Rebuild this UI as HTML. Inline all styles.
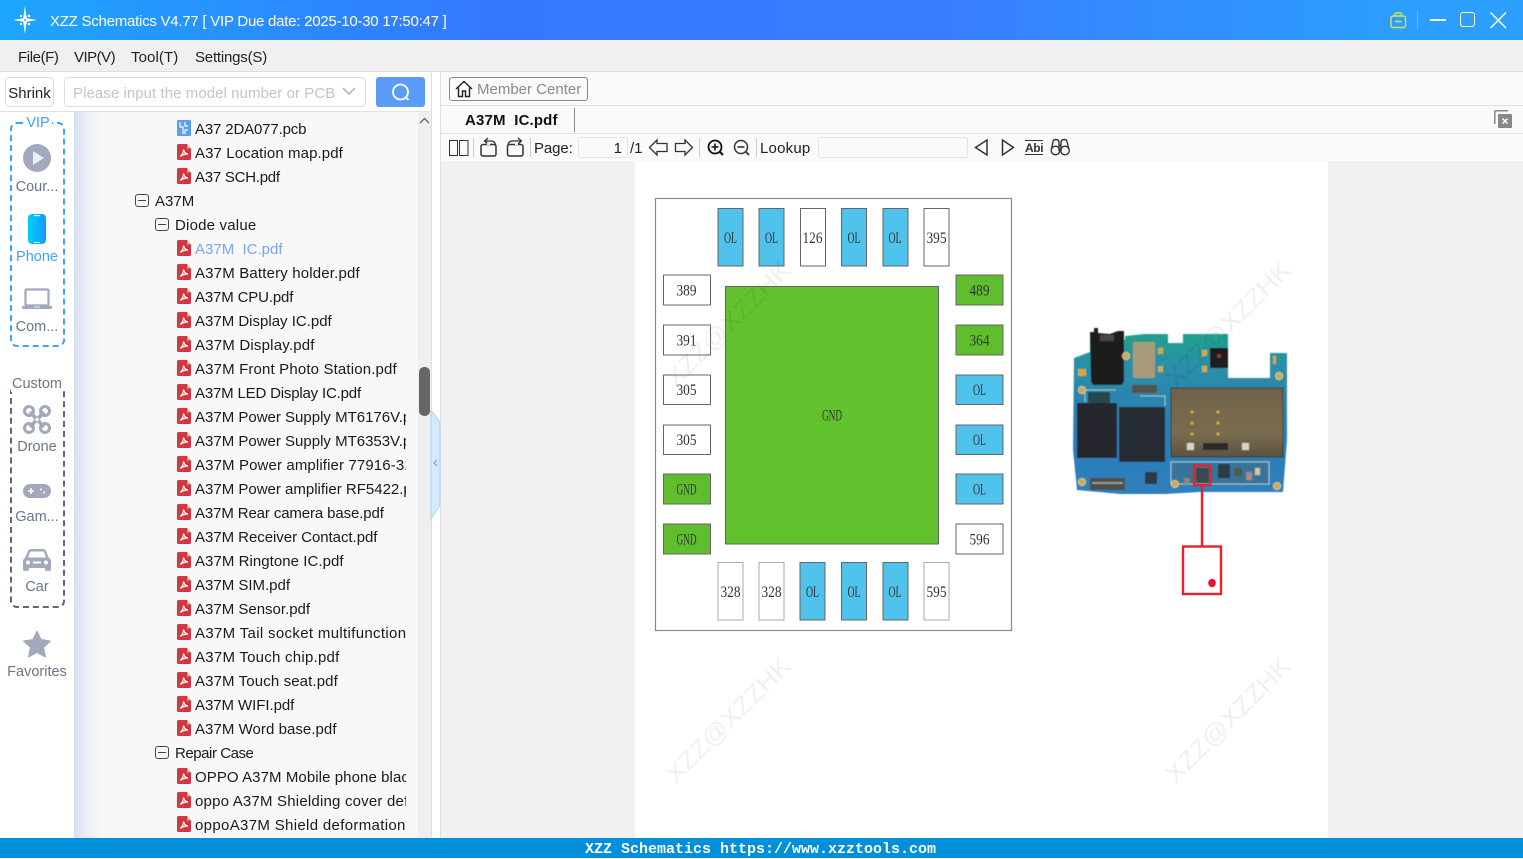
<!DOCTYPE html>
<html><head><meta charset="utf-8"><style>
html,body{margin:0;padding:0;width:1523px;height:858px;overflow:hidden;background:#fff;font-family:"Liberation Sans","Noto Sans CJK SC",sans-serif;font-size:15px;color:#222}
.a{position:absolute;white-space:pre}
svg{position:absolute;overflow:visible}
#tree{position:absolute;left:74px;top:112px;width:344px;height:726px;overflow:hidden;background:linear-gradient(90deg,#d5e0f2 0,#e8edf6 10px,#f8f8f8 28px)}
#rows{position:absolute;left:0;top:4px;width:332px;overflow:hidden}
.r{height:24px;line-height:28px;white-space:pre;overflow:hidden;position:relative;color:#1a1a1a}
.f{padding-left:121px}
.f svg{left:103px;top:4px}
.d1{padding-left:81px}.d2{padding-left:101px}
.d1 i,.d2 i{position:absolute;top:6px;width:12px;height:11px;border:1.2px solid #444;border-radius:3px}
.d1 i{left:61px}.d2 i{left:81px}
.d1 i:after,.d2 i:after{content:"";position:absolute;left:2px;right:2px;top:5px;height:1.2px;background:#444}
.s{position:absolute;left:5px;width:64px;text-align:center;color:#6b7688;font-size:14.5px;line-height:22px}
</style></head><body>
<svg width="0" height="0" style="position:absolute"><defs>
<symbol id="pdf" viewBox="0 0 14 16"><path d="M1.5 0H10L14 4.5V14.5A1.5 1.5 0 0 1 12.500 16H1.500A1.500 1.500 0 0 1 0 14.500V1.500A1.500 1.500 0 0 1 1.500 0Z" fill="#d2373f"/><path d="M10 0V4.500H14Z" fill="#eea0a4"/><path d="M3 12.500C5 11.500 6.500 8.500 6.700 5.500C7 8 8.500 9.800 11 10C8.500 10 5.500 10.500 3 12.500Z" fill="none" stroke="#fff" stroke-width="1.200"/></symbol>
</defs></svg>

<!-- title bar -->
<div class="a" style="left:0;top:0;width:1523px;height:40px;background:linear-gradient(90deg,#1ea6fc 0,#3478ff 32%,#3a7cff 60%,#2b9efe 92%,#2b9efe 100%)"></div>
<svg style="left:12px;top:6px" width="26" height="28" viewBox="0 0 26 28"><path d="M13 0L14.800 12.200L25 14L14.800 15.800L13 28L11.200 15.800L1 14L11.200 12.200Z" fill="#fff"/><circle cx="9" cy="10" r="1.200" fill="#fff"/><circle cx="17" cy="10" r="1.200" fill="#fff"/><circle cx="9" cy="18" r="1.200" fill="#fff"/><circle cx="17" cy="18" r="1.200" fill="#fff"/><circle cx="13" cy="14" r="1" fill="#3a9cff"/></svg>
<div class="a" style="left:50px;top:11px;line-height:21px;font-size:15px;color:#fff;letter-spacing:-.245px">XZZ Schematics V4.77 [ VIP Due date: 2025-10-30 17:50:47 ]</div>
<svg style="left:1390px;top:12px" width="17" height="17" viewBox="0 0 17 17" fill="none" stroke="#d9e43c" stroke-width="1.400"><rect x="1" y="4" width="14.500" height="11.500" rx="2"/><path d="M5 4V2.200Q5 1 6.200 1H10.300Q11.500 1 11.500 2.200V4M5 9.500H11.500"/></svg>
<div class="a" style="left:1417px;top:10px;width:1px;height:20px;background:#74b9fb"></div>
<div class="a" style="left:1430px;top:19px;width:16px;height:2px;background:#fff"></div>
<div class="a" style="left:1460px;top:12px;width:13px;height:13px;border:1.500px solid #fff;border-radius:3px"></div>
<svg style="left:1490px;top:12px" width="17" height="17" viewBox="0 0 17 17"><path d="M.5.500L16 16M16 .500L.5 16" stroke="#fff" stroke-width="1.500"/></svg>

<!-- menu -->
<div class="a" style="left:0;top:40px;width:1523px;height:31px;background:#f0f0f0;border-bottom:1px solid #dcdcdc"></div>
<div class="a" style="left:18px;top:49px;line-height:18px;letter-spacing:-.4px">File(F)</div>
<div class="a" style="left:74px;top:49px;line-height:18px;letter-spacing:-.5px">VIP(V)</div>
<div class="a" style="left:131px;top:49px;line-height:18px;letter-spacing:.1px">Tool(T)</div>
<div class="a" style="left:195px;top:49px;line-height:18px;letter-spacing:-.2px">Settings(S)</div>

<!-- search row -->
<div class="a" style="left:431px;top:72px;width:10px;height:766px;background:#fff;border-right:1px solid #e0e0e0;border-left:1px solid #e0e0e0;box-sizing:border-box"></div>
<div class="a" style="left:5px;top:77px;width:47px;height:28px;border:1px solid #dcdfe6;border-radius:4px;text-align:center;line-height:31px;color:#222">Shrink</div>
<div class="a" style="left:64px;top:77px;width:300px;height:28px;border:1px solid #dcdfe6;border-radius:4px;line-height:31px;color:#c0c4cc;text-indent:8px;letter-spacing:.06px">Please input the model number or PCB</div>
<svg style="left:342px;top:87px" width="14" height="9" viewBox="0 0 14 9"><path d="M1 1L7 7L13 1" fill="none" stroke="#a8abb2" stroke-width="1.400"/></svg>
<div class="a" style="left:376px;top:77px;width:49px;height:30px;background:#5a9cf8;border-radius:3px"></div>
<svg style="left:391px;top:83px" width="20" height="19" viewBox="0 0 20 19" fill="none" stroke="#fff" stroke-width="1.800"><circle cx="9.500" cy="9" r="7.500"/><path d="M15 14.500L17.500 17"/></svg>
<div class="a" style="left:0;top:111px;width:431px;height:1px;background:#e0e0e0"></div>

<!-- sidebar -->
<div class="a" style="left:10px;top:122px;width:51px;height:221px;border:2px dashed #3ea2ff;border-radius:7px;box-sizing:content-box"></div>
<div class="s" style="top:113px;left:24px;width:28px;background:#fff;color:#3ea2ff;height:14px;line-height:20px;overflow:hidden">VIP</div>
<svg style="left:23px;top:144px" width="28" height="28" viewBox="0 0 28 28"><circle cx="14" cy="14" r="14" fill="#a3a9bc"/><path d="M10 7L21 14L10 21Z" fill="#eceef2"/></svg>
<div class="s" style="top:176px">Cour...</div>
<svg style="left:28px;top:214px" width="18" height="31" viewBox="0 0 18 31"><defs><linearGradient id="ph" x1="0" x2="1" y1="0" y2="0"><stop offset="0" stop-color="#00d0f5"/><stop offset="1" stop-color="#1a98ff"/></linearGradient></defs><rect width="18" height="30" rx="4" fill="url(#ph)"/><rect x="6" y="1" width="6" height="1.200" fill="#c8f4ff"/><rect x="6" y="28" width="6" height="1" fill="#c8f4ff"/></svg>
<div class="s" style="top:246px;color:#3ea2ff">Phone</div>
<svg style="left:22px;top:288px" width="30" height="22" viewBox="0 0 30 22"><rect x="3.500" y="1.500" width="23" height="16" rx="1" fill="#fff" stroke="#a3a9bc" stroke-width="2.200"/><path d="M0 18H30V19.500Q30 21 28.500 21H1.500Q0 21 0 19.500Z" fill="#a3a9bc"/><rect x="12" y="18.500" width="6" height="1" fill="#eee"/></svg>
<div class="s" style="top:316px">Com...</div>

<div class="a" style="left:10px;top:385px;width:51px;height:219px;border:2px dashed #5d6878;border-radius:7px"></div>
<div class="s" style="top:373px;left:11px;width:52px;background:#fff;height:19px">Custom</div>
<svg style="left:23px;top:405px" width="28" height="29" viewBox="0 0 28 29" fill="none" stroke="#a3a9bc"><circle cx="6" cy="6" r="4.500" stroke-width="3"/><circle cx="22" cy="6" r="4.500" stroke-width="3"/><circle cx="6" cy="23" r="4.500" stroke-width="3"/><circle cx="22" cy="23" r="4.500" stroke-width="3"/><path d="M7 7L21 22M21 7L7 22" stroke-width="3.500"/><circle cx="14" cy="14.500" r="2.500" fill="#fff" stroke-width="1.500"/></svg>
<div class="s" style="top:436px">Drone</div>
<svg style="left:23px;top:484px" width="28" height="14" viewBox="0 0 28 14"><rect width="28" height="14" rx="7" fill="#a3a9bc"/><path d="M5 7H11M8 4V10" stroke="#fff" stroke-width="1.500"/><circle cx="18" cy="5.500" r="1" fill="#fff"/><circle cx="21" cy="8.500" r="1" fill="#fff"/></svg>
<div class="s" style="top:506px">Gam...</div>
<svg style="left:23px;top:548px" width="28" height="24" viewBox="0 0 28 24"><path d="M2 10L5 3Q6 1 8 1H20Q22 1 23 3L26 10Q28 11 28 13V21Q28 23 26 23H24Q22 23 22 21V20H6V21Q6 23 4 23H2Q0 23 0 21V13Q0 11 2 10Z" fill="#a3a9bc"/><path d="M5 9.500L7 4Q7.500 3.500 8.500 3.500H19.500Q20.500 3.500 21 4L23 9.500Z" fill="#fff"/><circle cx="5" cy="14.500" r="2" fill="#fff"/><circle cx="23" cy="14.500" r="2" fill="#fff"/><rect x="10" y="13.500" width="8" height="2" fill="#fff"/></svg>
<div class="s" style="top:576px">Car</div>
<svg style="left:23px;top:630px" width="28" height="28" viewBox="0 0 28 28"><path d="M14 1L18 9.500L27.500 11L20.500 17.500L22.500 27L14 22.500L5.500 27L7.500 17.500L.5 11L10 9.500Z" fill="#a3a9bc" stroke="#a3a9bc" stroke-linejoin="round" stroke-width="1"/></svg>
<div class="s" style="top:661px">Favorites</div>

<!-- tree -->
<div id="tree"><div id="rows">
<div class="r f" style="letter-spacing:-.15px"><svg width="14" height="16" viewBox="0 0 14 16"><rect width="14" height="16" rx="1" fill="#5c9cf5"/><path d="M3 2V7H6V14M8 2V6H11M8 14V10H11" fill="none" stroke="#fff" stroke-width="1.200"/></svg>A37 2DA077.pcb</div>
<div class="r f" style="letter-spacing:.1px"><svg width="14" height="16"><use href="#pdf"/></svg>A37 Location map.pdf</div>
<div class="r f" style="letter-spacing:-.25px"><svg width="14" height="16"><use href="#pdf"/></svg>A37 SCH.pdf</div>
<div class="r d1"><i></i>A37M</div>
<div class="r d2" style="letter-spacing:.2px"><i></i>Diode value</div>
<div class="r f" style="color:#7aa5fa"><svg width="14" height="16"><use href="#pdf"/></svg>A37M  IC.pdf</div>
<div class="r f" style="letter-spacing:.17px"><svg width="14" height="16"><use href="#pdf"/></svg>A37M Battery holder.pdf</div>
<div class="r f" style="letter-spacing:-.15px"><svg width="14" height="16"><use href="#pdf"/></svg>A37M CPU.pdf</div>
<div class="r f"><svg width="14" height="16"><use href="#pdf"/></svg>A37M Display IC.pdf</div>
<div class="r f" style="letter-spacing:.2px"><svg width="14" height="16"><use href="#pdf"/></svg>A37M Display.pdf</div>
<div class="r f" style="letter-spacing:.15px"><svg width="14" height="16"><use href="#pdf"/></svg>A37M Front Photo Station.pdf</div>
<div class="r f" style="letter-spacing:-.18px"><svg width="14" height="16"><use href="#pdf"/></svg>A37M LED Display IC.pdf</div>
<div class="r f"><svg width="14" height="16"><use href="#pdf"/></svg>A37M Power Supply MT6176V.pdf</div>
<div class="r f"><svg width="14" height="16"><use href="#pdf"/></svg>A37M Power Supply MT6353V.pdf</div>
<div class="r f" style="letter-spacing:.12px"><svg width="14" height="16"><use href="#pdf"/></svg>A37M Power amplifier 77916-31.pdf</div>
<div class="r f"><svg width="14" height="16"><use href="#pdf"/></svg>A37M Power amplifier RF5422.pdf</div>
<div class="r f" style="letter-spacing:-.12px"><svg width="14" height="16"><use href="#pdf"/></svg>A37M Rear camera base.pdf</div>
<div class="r f" style="letter-spacing:-.04px"><svg width="14" height="16"><use href="#pdf"/></svg>A37M Receiver Contact.pdf</div>
<div class="r f" style="letter-spacing:.05px"><svg width="14" height="16"><use href="#pdf"/></svg>A37M Ringtone IC.pdf</div>
<div class="r f"><svg width="14" height="16"><use href="#pdf"/></svg>A37M SIM.pdf</div>
<div class="r f"><svg width="14" height="16"><use href="#pdf"/></svg>A37M Sensor.pdf</div>
<div class="r f" style="letter-spacing:.33px"><svg width="14" height="16"><use href="#pdf"/></svg>A37M Tail socket multifunction</div>
<div class="r f" style="letter-spacing:.25px"><svg width="14" height="16"><use href="#pdf"/></svg>A37M Touch chip.pdf</div>
<div class="r f" style="letter-spacing:.12px"><svg width="14" height="16"><use href="#pdf"/></svg>A37M Touch seat.pdf</div>
<div class="r f" style="letter-spacing:-.06px"><svg width="14" height="16"><use href="#pdf"/></svg>A37M WIFI.pdf</div>
<div class="r f" style="letter-spacing:.05px"><svg width="14" height="16"><use href="#pdf"/></svg>A37M Word base.pdf</div>
<div class="r d2" style="letter-spacing:-.45px"><i></i>Repair Case</div>
<div class="r f" style="letter-spacing:.08px"><svg width="14" height="16"><use href="#pdf"/></svg>OPPO A37M Mobile phone black</div>
<div class="r f" style="letter-spacing:.2px"><svg width="14" height="16"><use href="#pdf"/></svg>oppo A37M Shielding cover defo</div>
<div class="r f" style="letter-spacing:.33px"><svg width="14" height="16"><use href="#pdf"/></svg>oppoA37M Shield deformation</div>
</div></div>
<div class="a" style="left:418px;top:112px;width:13px;height:726px;background:#efefef"></div>
<svg style="left:419px;top:117px" width="11" height="7" viewBox="0 0 11 7"><path d="M1 6L5.500 1.500L10 6" fill="none" stroke="#555" stroke-width="1.200"/></svg>
<div class="a" style="left:419px;top:367px;width:11px;height:49px;background:#666;border-radius:5px"></div>
<svg style="left:431px;top:410px" width="10" height="110" viewBox="0 0 10 110"><path d="M0 0L9 12V95L0 109Z" fill="#d5e9ff" stroke="#a8d4ff"/><path d="M6 50L3 53L6 56" fill="none" stroke="#5aa9f5" stroke-width="1.200"/></svg>

<!-- right head -->
<div class="a" style="left:441px;top:72px;width:1082px;height:766px;background:#f1f1f1"></div>
<div class="a" style="left:441px;top:72px;width:1082px;height:33px;background:#fafafa;border-bottom:1px solid #e0e0e0"></div>
<div class="a" style="left:441px;top:106px;width:1082px;height:27px;background:#fafafa;border-bottom:1px solid #e0e0e0"></div>
<div class="a" style="left:441px;top:134px;width:1082px;height:27px;background:#fafafa"></div>

<div class="a" style="left:449px;top:77px;width:137px;height:22px;border:1px solid #888;border-radius:3px;line-height:24px;color:#8a8a8a;text-indent:27px">Member Center</div>
<svg style="left:455px;top:80px" width="18" height="18" viewBox="0 0 18 18" fill="none" stroke="#222" stroke-width="1.400"><path d="M1 9L9 1.500L17 9M3.500 7.500V16.500H7.500V11H10.500V16.500H14.500V7.500"/></svg>
<div class="a" style="left:465px;top:112px;line-height:18px;font-weight:bold;color:#111;letter-spacing:.15px">A37M  IC.pdf</div>
<div class="a" style="left:574px;top:108px;width:1px;height:24px;background:#888"></div>
<svg style="left:1494px;top:110px" width="18" height="18" viewBox="0 0 18 18"><path d="M.8 14V1.800Q.8 .8 1.800 .8H14" fill="none" stroke="#888" stroke-width="1.500"/><rect x="4" y="4" width="14" height="14" rx="1" fill="#888"/><path d="M8.500 8.500L13.500 13.500M13.500 8.500L8.500 13.500" stroke="#fff" stroke-width="1.500"/></svg>

<!-- toolbar -->
<svg style="left:441px;top:134px" width="640" height="27" viewBox="441 134 640 27" fill="none" stroke="#333" stroke-width="1.200">
<rect x="449.500" y="140.500" width="8" height="15" stroke-width="1"/><rect x="459.500" y="140.500" width="8.500" height="15" stroke-width="1"/>
<path d="M473.500 138V157M530.500 138V157M699.500 138V157M756.500 138V157" stroke="#ccc" stroke-width="1"/>
<rect x="481" y="144.500" width="15" height="11.500" rx="2" stroke-width="1.500"/><path d="M488 138L484.500 141L488 144M484.500 141H491Q495 141 495.500 145" stroke-width="1.300" stroke="#333"/><path d="M487 144H490" stroke="#fafafa" stroke-width="1.800"/>
<rect x="507.500" y="144.500" width="15.500" height="11.500" rx="2" stroke-width="1.500"/><path d="M518 138L521.500 141L518 144M521.500 141H513Q508.500 141 508 145" stroke-width="1.300"/><path d="M515 144H518" stroke="#fafafa" stroke-width="1.800"/>
<path d="M657 140L649.500 147.500L657 155V151.500H667V143.500H657Z" stroke-width="1.300"/>
<path d="M685 140L692.500 147.500L685 155V151.500H675.500V143.500H685Z" stroke-width="1.300"/>
<circle cx="715" cy="147" r="6.500" stroke="#111" stroke-width="1.800"/><path d="M711.500 147H718.500M715 143.500V150.500" stroke="#111" stroke-width="1.600"/><path d="M720 152L723 155" stroke="#111" stroke-width="2"/>
<circle cx="741" cy="147" r="6.500" stroke-width="1.500"/><path d="M737.500 147H744.500" stroke-width="1.600"/><path d="M746 152L749 155" stroke-width="1.800"/>
<path d="M987 140L975.500 147.500L987 155Z" stroke-width="1.500"/>
<path d="M1002.500 140L1013.500 147.500L1002.500 155Z" stroke-width="1.500"/>
<path d="M1025 140.500H1043M1025 154.500H1043" stroke-width="1"/>
<circle cx="1055.500" cy="150.500" r="4.300" stroke-width="1.400"/><circle cx="1065" cy="150.500" r="4.300" stroke-width="1.400"/>
<path d="M1051.500 149L1053 141.500Q1053.500 139.500 1055.500 139.500Q1059 139.500 1059 142.500V151M1061 151V142.500Q1061 139.500 1064.500 139.500Q1066.500 139.500 1067 141.500L1068.700 149M1059 145.500H1061" stroke-width="1.400"/>
</svg>
<div class="a" style="left:534px;top:140px;line-height:18px;letter-spacing:-.1px">Page:</div>
<div class="a" style="left:578px;top:137px;width:43px;height:19px;border:1px solid #e4e4e4;background:#fafafa;border-radius:2px;padding-right:5px;text-align:right;line-height:21px">1</div>
<div class="a" style="left:630px;top:140px;line-height:18px">/1</div>
<div class="a" style="left:760px;top:140px;line-height:18px;letter-spacing:.2px">Lookup</div>
<div class="a" style="left:818px;top:137px;width:148px;height:19px;border:1px solid #e4e4e4;background:#fafafa;border-radius:2px"></div>
<div class="a" style="left:1025px;top:141px;line-height:14px;font-size:12px;font-weight:bold;color:#333;letter-spacing:-.4px">Abi</div>

<!-- pdf page -->
<div class="a" style="left:635px;top:161px;width:693px;height:677px;background:#fff"></div>
<svg style="left:0;top:0" width="1523" height="858" viewBox="0 0 1523 858">
<defs>
<filter id="bl" x="-5%" y="-5%" width="110%" height="110%"><feGaussianBlur stdDeviation=".35"/></filter>
<filter id="bl2" x="-5%" y="-5%" width="110%" height="110%"><feGaussianBlur stdDeviation=".6"/></filter>
<linearGradient id="bd" x1="0" y1="0" x2="0" y2="1"><stop offset="0" stop-color="#22a08c"/><stop offset=".2" stop-color="#2a8fa8"/><stop offset=".55" stop-color="#2a7eb5"/><stop offset="1" stop-color="#2e7fbc"/></linearGradient>
<linearGradient id="tr" x1="0" y1="0" x2="0" y2="1"><stop offset="0" stop-color="#6e6249"/><stop offset=".65" stop-color="#7a6d50"/><stop offset="1" stop-color="#5d5340"/></linearGradient>
</defs>
<g filter="url(#bl)">
<rect x="655.500" y="198.500" width="356" height="432" fill="#fff" stroke="#8a8a8a" stroke-width="1.200"/>
<g stroke="#666" stroke-width="1">
<rect x="718" y="208.500" width="25" height="57.500" fill="#4fc3ec"/><rect x="759" y="208.500" width="25" height="57.500" fill="#4fc3ec"/><rect x="800.500" y="208.500" width="25" height="57.500" fill="#fff"/><rect x="841.500" y="208.500" width="25" height="57.500" fill="#4fc3ec"/><rect x="883" y="208.500" width="25" height="57.500" fill="#4fc3ec"/><rect x="924" y="208.500" width="25" height="57.500" fill="#fff"/>
<rect x="663.500" y="275" width="47" height="30" fill="#fff"/><rect x="663.500" y="325" width="47" height="30" fill="#fff"/><rect x="663.500" y="375" width="47" height="29.500" fill="#fff"/><rect x="663.500" y="425" width="47" height="29.500" fill="#fff"/><rect x="663.500" y="474" width="47" height="30" fill="#60bd2e"/><rect x="663.500" y="524" width="47" height="30" fill="#60bd2e"/>
<rect x="956" y="275" width="47" height="30" fill="#60bd2e"/><rect x="956" y="325" width="47" height="30" fill="#60bd2e"/><rect x="956" y="375" width="47" height="29.500" fill="#4fc3ec"/><rect x="956" y="425" width="47" height="29.500" fill="#4fc3ec"/><rect x="956" y="474" width="47" height="30" fill="#4fc3ec"/><rect x="956" y="524" width="47" height="30" fill="#fff"/>
<rect x="718" y="562.500" width="25" height="57.500" fill="#fff" stroke="#aaa"/><rect x="759" y="562.500" width="25" height="57.500" fill="#fff" stroke="#aaa"/><rect x="800" y="562.500" width="25" height="57.500" fill="#4fc3ec"/><rect x="841.500" y="562.500" width="25" height="57.500" fill="#4fc3ec"/><rect x="883" y="562.500" width="25" height="57.500" fill="#4fc3ec"/><rect x="924" y="562.500" width="25" height="57.500" fill="#fff" stroke="#aaa"/>
<rect x="725.500" y="286.500" width="213" height="257.500" fill="#62c22f"/>
</g>
<g font-family="Liberation Serif,serif" font-size="15.500" fill="#333" text-anchor="middle">
<text x="730.500" y="243" textLength="13" lengthAdjust="spacingAndGlyphs">OL</text><text x="771.500" y="243" textLength="13" lengthAdjust="spacingAndGlyphs">OL</text><text x="812.500" y="243" textLength="20" lengthAdjust="spacingAndGlyphs">126</text><text x="854" y="243" textLength="13" lengthAdjust="spacingAndGlyphs">OL</text><text x="895" y="243" textLength="13" lengthAdjust="spacingAndGlyphs">OL</text><text x="936.500" y="243" textLength="20" lengthAdjust="spacingAndGlyphs">395</text>
<text x="686.500" y="295.500" textLength="20" lengthAdjust="spacingAndGlyphs">389</text><text x="686.500" y="345.500" textLength="20" lengthAdjust="spacingAndGlyphs">391</text><text x="686.500" y="395" textLength="20" lengthAdjust="spacingAndGlyphs">305</text><text x="686.500" y="445" textLength="20" lengthAdjust="spacingAndGlyphs">305</text><text x="686.500" y="494.500" textLength="20" lengthAdjust="spacingAndGlyphs">GND</text><text x="686.500" y="544.500" textLength="20" lengthAdjust="spacingAndGlyphs">GND</text>
<text x="979.500" y="295.500" textLength="20" lengthAdjust="spacingAndGlyphs">489</text><text x="979.500" y="345.500" textLength="20" lengthAdjust="spacingAndGlyphs">364</text><text x="979.500" y="395" textLength="13" lengthAdjust="spacingAndGlyphs">OL</text><text x="979.500" y="445" textLength="13" lengthAdjust="spacingAndGlyphs">OL</text><text x="979.500" y="494.500" textLength="13" lengthAdjust="spacingAndGlyphs">OL</text><text x="979.500" y="544.500" textLength="20" lengthAdjust="spacingAndGlyphs">596</text>
<text x="730.500" y="597" textLength="20" lengthAdjust="spacingAndGlyphs">328</text><text x="771.500" y="597" textLength="20" lengthAdjust="spacingAndGlyphs">328</text><text x="812.500" y="597" textLength="13" lengthAdjust="spacingAndGlyphs">OL</text><text x="854" y="597" textLength="13" lengthAdjust="spacingAndGlyphs">OL</text><text x="895" y="597" textLength="13" lengthAdjust="spacingAndGlyphs">OL</text><text x="936.500" y="597" textLength="20" lengthAdjust="spacingAndGlyphs">595</text>
<text x="832" y="420.500" textLength="20" lengthAdjust="spacingAndGlyphs">GND</text>
</g>
</g>
<!-- PCB -->
<g filter="url(#bl2)">
<path d="M1074 358L1090 352V340H1125V336L1145 334H1168V343H1183V334H1228V378H1270V353H1287V440L1283 492H1200L1165 494H1120L1077 490L1073 450Z" fill="url(#bd)"/>
<path d="M1090 332H1094V328H1098V333L1110 334L1118 331H1124V380Q1124 385 1119 385H1095Q1091 385 1091 380Z" fill="#1c1c1e"/>
<rect x="1100" y="335" width="14" height="6" fill="#4a4a46"/>
<rect x="1133" y="342" width="22" height="36" fill="#a89a78"/>
<rect x="1132" y="385" width="25" height="8" fill="#55534a"/>
<rect x="1090" y="478" width="35" height="12" fill="#4d4e4a"/><rect x="1092" y="482" width="31" height="2" fill="#9a9a90"/>
<rect x="1210" y="348" width="18" height="20" fill="#1f1f22"/><circle cx="1219" cy="356" r="2" fill="#a33"/>
<path d="M1085 390H1116M1085 390V402M1140 396H1165V406" fill="none" stroke="#9fc4cc" stroke-width="1"/>
<rect x="1088" y="392" width="22" height="11" fill="#28474e"/>
<rect x="1171" y="388" width="112" height="69" fill="url(#tr)" stroke="#3b3527" stroke-width="1"/>
<g fill="#e0b030"><circle cx="1192" cy="412" r="1.500"/><circle cx="1192" cy="423" r="1.500"/><circle cx="1192" cy="434" r="1.500"/><circle cx="1218" cy="412" r="1.500"/><circle cx="1218" cy="423" r="1.500"/><circle cx="1218" cy="434" r="1.500"/></g>
<rect x="1203" y="443" width="25" height="7" fill="#2b2b2b"/><rect x="1187" y="443" width="7" height="7" fill="#d8d4c4"/><rect x="1242" y="443" width="7" height="7" fill="#d8d4c4"/>
<rect x="1077" y="403" width="40" height="55" fill="#26282d"/><rect x="1119" y="407" width="46" height="55" fill="#272a30"/>
<rect x="1171" y="462" width="98" height="22" fill="#38739a" stroke="#a8c8d0" stroke-width="1"/>
<rect x="1218" y="464" width="12" height="14" fill="#2a3a44"/><rect x="1234" y="468" width="8" height="8" fill="#4a5a50"/><rect x="1246" y="472" width="6" height="8" fill="#a88"/><rect x="1255" y="468" width="5" height="7" fill="#d8c898"/>
<rect x="1145" y="472" width="12" height="12" fill="#2a3a44"/><rect x="1184" y="478" width="6" height="6" fill="#887"/>
<rect x="1196" y="468" width="13" height="15" fill="#3a4a50"/>
<g fill="#c9a95a" stroke="#e2c98a"><circle cx="1082" cy="390" r="3.500"/><circle cx="1126" cy="356" r="3.500"/><circle cx="1279" cy="376" r="3.500"/><circle cx="1082" cy="482" r="3.500"/><circle cx="1175" cy="484" r="3.500"/><circle cx="1277" cy="486" r="3.500"/></g>
<g fill="#d8a83a"><rect x="1078" y="369" width="8" height="7"/><rect x="1158" y="348" width="5" height="6"/><rect x="1158" y="366" width="5" height="6"/><rect x="1202" y="350" width="5" height="6"/><rect x="1202" y="366" width="5" height="6"/><rect x="1273" y="356" width="3" height="8"/></g>
</g>
<g filter="url(#bl)" fill="none" stroke="#e8202c" stroke-width="2.400">
<rect x="1194" y="465.500" width="16.500" height="19.500"/><path d="M1202 485V546"/><rect x="1183" y="546.500" width="38" height="47.500"/>
</g>
<ellipse cx="1212" cy="583" rx="3.800" ry="4.300" fill="#e8132c"/>
<!-- watermarks -->
<g font-family="Liberation Sans,sans-serif" font-size="25" fill="#000" opacity=".06" text-anchor="middle">
<text transform="translate(734,726) rotate(-45)" textLength="165" lengthAdjust="spacingAndGlyphs">XZZ@XZZHK</text>
<text transform="translate(1234,726) rotate(-45)" textLength="165" lengthAdjust="spacingAndGlyphs">XZZ@XZZHK</text>
<text transform="translate(734,330) rotate(-45)" textLength="165" lengthAdjust="spacingAndGlyphs">XZZ@XZZHK</text>
<text transform="translate(1234,330) rotate(-45)" textLength="165" lengthAdjust="spacingAndGlyphs">XZZ@XZZHK</text>
</g>
</svg>

<!-- footer -->
<div class="a" style="left:0;top:838px;width:1523px;height:20px;background:#0090d9"></div>
<div class="a" style="left:585px;top:841px;line-height:18px;font-family:'Liberation Mono',monospace;font-size:15px;font-weight:bold;color:#fff">XZZ Schematics https://www.xzztools.com</div>
</body></html>
